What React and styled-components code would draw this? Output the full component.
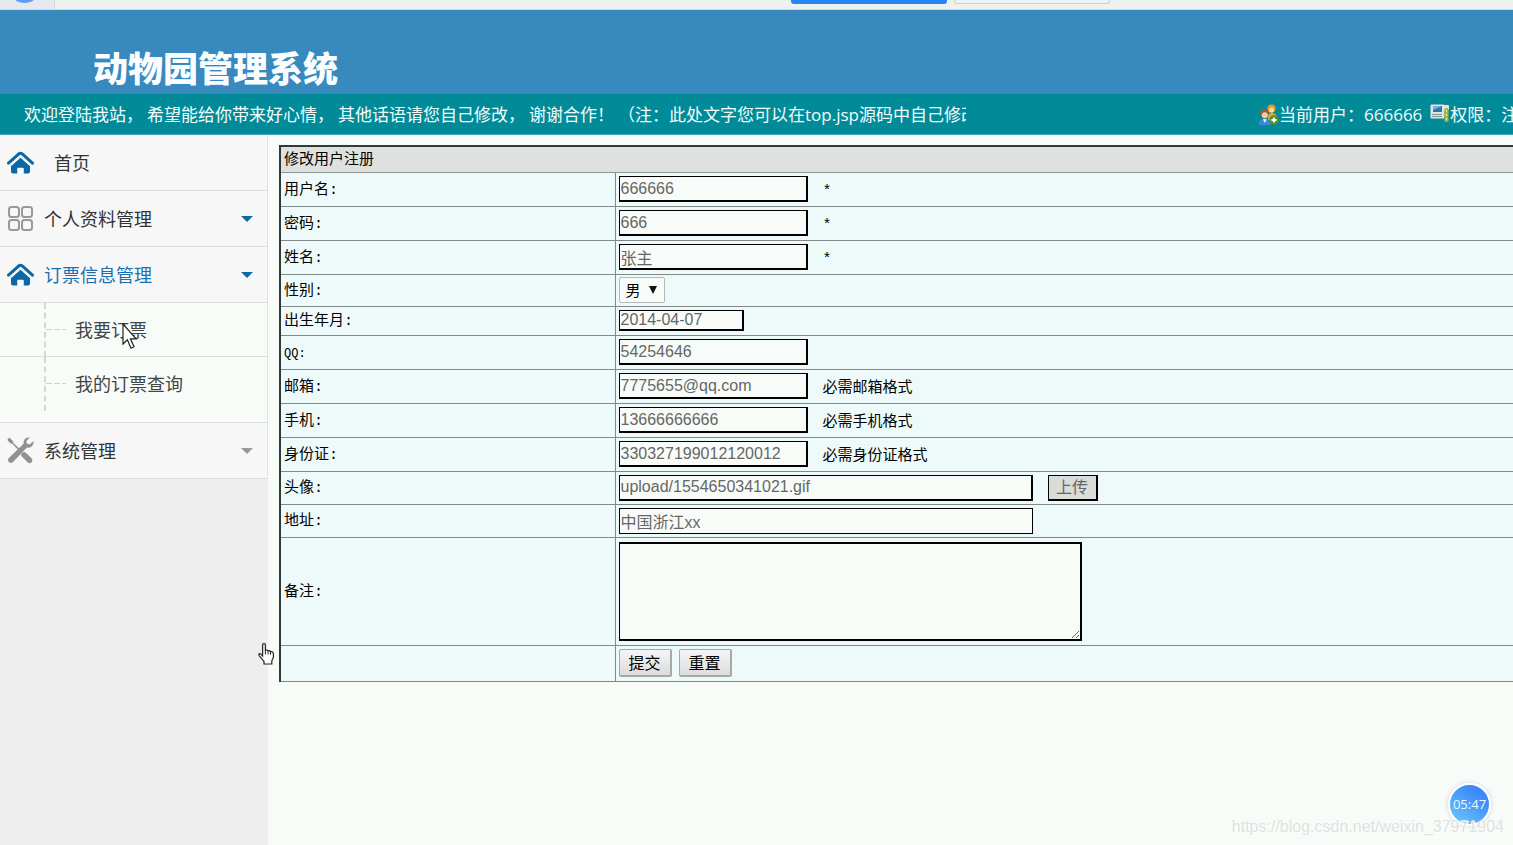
import React from 'react';
import styled, { createGlobalStyle } from 'styled-components';

const GlobalStyle = createGlobalStyle`
  * { box-sizing: border-box; }
  html, body, #root { height: 100%; }
  body {
    margin: 0;
    overflow: hidden;
    background: #f8fcf8;
    font-family: 'Open Sans', 'Noto Sans CJK SC', sans-serif;
  }
`;

const Page = styled.div`
  min-height: 100vh;
  display: flex;
  flex-direction: column;
  position: relative;
  overflow: hidden;
`;

/* browser chrome above the site */
const Chrome = styled.div`
  height: 10px;
  flex: none;
  display: flex;
  background: #eef2ee;
  border-bottom: 1px solid #c4e0e4;
`;
const ChromeTab = styled.div`
  width: 55px;
  display: flex;
  align-items: flex-start;
  padding-left: 15px;
  background: #e6eaf0;
  border-right: 1px solid #d4d8dc;
`;
const ChromeButtons = styled.div`
  flex: 1;
  display: flex;
  gap: 7px;
  align-items: flex-start;
  justify-content: flex-end;
  padding-right: 403px;
`;
const ChromeButton = styled.div`
  width: 156px;
  height: 4px;
  border-radius: 0 0 3px 3px;
  background: ${props => props.$primary ? '#2388f5' : '#eef1f5'};
  border: ${props => props.$primary ? '0' : '1px solid #cdd2d2'};
  border-top: 0;
`;

const Banner = styled.header`
  height: 84px;
  flex: none;
  padding: 31px 0 0 93px;
  background: #3889bd;
`;
const Title = styled.h1`
  margin: 0;
  font-family: 'Noto Sans CJK SC', sans-serif;
  font-size: 35px;
  line-height: 52px;
  font-weight: 900;
  color: #fafdff;
`;

const InfoBar = styled.div`
  height: 41px;
  flex: none;
  display: flex;
  align-items: center;
  justify-content: space-between;
  padding: 1px 0 0 24px;
  background: #018b99;
  border-bottom: 1px solid #4aa5cc;
  color: #f2fdfd;
  font-size: 17px;
  line-height: 24px;
  white-space: nowrap;
`;
const Marquee = styled.div`
  flex: 0 1 942px;
  display: flex;
  gap: 4px;
  overflow: hidden;
`;
const UserInfo = styled.div`
  flex: 0 0 255px;
  display: flex;
  align-items: center;
  gap: 8px;
  overflow: hidden;
`;
const UserItem = styled.span`
  flex: none;
  display: flex;
  align-items: center;
`;

const Body = styled.div`
  flex: 1;
  display: flex;
`;
const Sidebar = styled.nav`
  width: 268px;
  flex: none;
  background: #eeeeee;
`;
const MenuItem = styled.a`
  height: 56px;
  display: flex;
  align-items: center;
  gap: ${props => props.$wide ? '20px' : '10px'};
  padding: 0 14px 0 7px;
  background: #f7f7f8;
  border-right: 1px solid #e2e4e2;
  border-bottom: 1px solid #dcdedc;
  color: ${props => props.$active ? '#1b6fae' : '#333'};
  font-size: 18px;
  line-height: 26px;
  text-decoration: none;
`;
const MenuText = styled.span`
  flex: 1;
`;
const Caret = styled.span`
  border: 6px solid transparent;
  border-top-color: ${props => props.$muted ? '#999' : '#0c6aa8'};
  border-bottom: 0;
`;
const SubMenu = styled.ul`
  margin: 0;
  padding: 0 0 11px;
  list-style: none;
  background: #f8fcf8;
  border-right: 1px solid #e2e4e2;
  border-bottom: 1px solid #dcdedc;
`;
const SubItem = styled.li`
  height: 54px;
  display: flex;
  align-items: center;
  border-bottom: 1px solid ${props => props.$last ? 'transparent' : '#dcdedc'};
`;
const Branch = styled.span`
  width: 22px;
  height: 54px;
  margin-left: 44px;
  border-left: 2px dashed #d4d8d4;
  display: flex;
  align-items: center;
  &::after {
    content: '';
    flex: 1;
    height: 1px;
    background: repeating-linear-gradient(90deg, #cdd2cd 0 6px, transparent 6px 8px);
  }
`;
const SubLink = styled.a`
  padding-left: 9px;
  color: #444;
  font-size: 18px;
  line-height: 26px;
  text-decoration: none;
`;

const Main = styled.main`
  flex: 1;
  min-width: 0;
  overflow: hidden;
  padding: 10px 0 0 11px;
`;
const FormTable = styled.table`
  width: calc(100% + 20px);
  table-layout: fixed;
  border-collapse: collapse;
  border: 2px solid #303a36;
  border-bottom-width: 1px;
  background: #eefaf9;
  color: #000;
  font-family: 'Liberation Mono', 'Noto Sans CJK SC', monospace;
  font-size: 15px;
  line-height: 20px;
`;
const LabelCol = styled.col`
  width: 335px;
`;
const HeadCell = styled.th`
  height: 26px;
  padding: 3px 3px 0;
  background: #dfe1de;
  border-bottom: 1px solid #8d9492;
  font-weight: 400;
  text-align: left;
`;
const Row = styled.tr`
  height: ${props => props.$height || 34}px;
`;
const Cell = styled.td`
  padding: 0 4px 0 3px;
  border: 1px solid #7f8987;
`;
const FieldLabel = styled.label`
  display: block;
  padding-top: 3px;
  font-size: ${props => props.$latin ? '12px' : '15px'};
`;
const Field = styled.div`
  display: flex;
  align-items: center;
  gap: ${props => props.$tight ? '7px' : '15px'};
`;
const TextInput = styled.input`
  width: ${props => props.$width || 189}px;
  height: ${props => props.$short ? '21px' : '26px'};
  padding: 0 1px;
  border: 1px solid #000;
  border-right-width: ${props => props.$thin ? '1px' : '2px'};
  border-bottom-width: ${props => props.$thin ? '1px' : '2px'};
  background: #f8fcf8;
  color: #666;
  font-family: 'Liberation Sans', 'Noto Sans CJK SC', sans-serif;
  font-size: 16px;
  line-height: 20px;
`;
const SelectBox = styled.span`
  position: relative;
  display: flex;
`;
const Select = styled.select`
  appearance: none;
  width: 46px;
  height: 26px;
  padding: 0 0 2px 6px;
  border: 1px solid #b4b8b6;
  border-radius: 2px;
  background: #f8fcf8;
  color: #000;
  font-family: 'Noto Sans CJK SC', sans-serif;
  font-size: 15px;
`;
const SelectArrow = styled.span`
  position: absolute;
  right: 8px;
  top: 9px;
  border: 4px solid transparent;
  border-top: 8px solid #111;
  border-bottom: 0;
  pointer-events: none;
`;
const TextArea = styled.textarea`
  width: 463px;
  height: 99px;
  border: 2px solid #000;
  border-left-width: 1px;
  background: #f8fcf8;
  font-size: 16px;
`;
const Hint = styled.span`
  padding-top: 6px;
`;
const Button = styled.button`
  width: 53px;
  height: 28px;
  padding: 0 0 2px;
  border: 1px solid #a4a8a6;
  border-right: 2px solid #a4a8a6;
  border-bottom: 2px solid #a4a8a6;
  border-radius: 2px;
  background: linear-gradient(#f5f5f5, #dcdcdc);
  color: #000;
  font-family: 'Noto Sans CJK SC', sans-serif;
  font-size: 16px;
  line-height: 20px;
`;
const UploadButton = styled(Button)`
  width: 50px;
  height: 26px;
  border: 1px solid #000;
  border-right-width: 2px;
  border-bottom-width: 2px;
  border-radius: 0;
  background: #dadcda;
  color: #666;
`;

const Pointer = styled.svg`
  position: absolute;
  left: ${props => props.$x}px;
  top: ${props => props.$y}px;
  pointer-events: none;
`;
const Timer = styled.div`
  position: absolute;
  right: 22px;
  bottom: 19px;
  width: 43px;
  height: 43px;
  display: flex;
  align-items: center;
  justify-content: center;
  padding-bottom: 2px;
  border: 2px solid #fff;
  border-radius: 50%;
  background: linear-gradient(215deg, #3c86fa 20%, #4aa0fa 50%, #6cc8fc 95%);
  box-shadow: 0 0 5px #ccd4dc;
  color: #f0f8ff;
  font-size: 13px;
`;
const Watermark = styled.div`
  position: absolute;
  right: 9px;
  bottom: 8px;
  color: #dfe2df;
  font-family: 'Liberation Sans', sans-serif;
  font-size: 16px;
  line-height: 20px;
  text-shadow: 1px 1px 0 #fff;
`;

const HomeIcon = () => (
  <svg width="27" height="24" viewBox="0 0 27 24">
    <path d="M1.5 12.2 11.8 3Q13.5 1.6 15.2 3L25.5 12.2" fill="none" stroke="#0a68a6" strokeWidth="3" strokeLinecap="round" />
    <path d="M13.5 6.8 23 15.2V20.6q0 2-2 2h-4.2v-4.8q0-1-1-1h-4.6q-1 0-1 1v4.8H6q-2 0-2-2v-5.4z" fill="#0a68a6" />
  </svg>
);

const GridIcon = () => (
  <svg width="27" height="27" viewBox="0 0 27 27" fill="none" stroke="#999" strokeWidth="2">
    <rect x="2" y="2" width="10" height="10" rx="2.5" />
    <rect x="15" y="2" width="10" height="10" rx="2.5" />
    <rect x="2" y="15" width="10" height="10" rx="2.5" />
    <rect x="15" y="15" width="10" height="10" rx="2.5" />
  </svg>
);

const ToolsIcon = () => (
  <svg width="27" height="27" viewBox="0 0 27 27" fill="#919191">
    <path d="M1 1.2 3 1l3.2 3.4-.1 1.3 7 6.6-1.2 1.3-7-7-1.4 0L.5 3.2z" />
    <path d="M14.4 16.8q2-2.6 4.2-1.2l6.2 6q1.4 1.8-.2 3.6t-3.8.4l-6-6q-1.4-1.2-.4-2.8z" />
    <path d="M22.8.6q-3.6-.8-5.4 1.8-1.2 1.8-.6 4.2L2.4 20.4q-2.4 2-.8 4.4 2 2.2 4.4.2L20 10.4q3 .8 5-1.2 2-2.2 1.4-5.2L23 7.2l-3-.4-.6-2.8z" />
  </svg>
);

const UsersIcon = () => (
  <svg width="21" height="22" viewBox="0 0 21 22">
    <circle cx="13.5" cy="4.5" r="4" fill="#e59a2e" />
    <circle cx="13.5" cy="6" r="2.6" fill="#fbd9a0" />
    <path d="M10 13q0-4 4-4t5 4v3h-9z" fill="#e4a53c" />
    <circle cx="6.5" cy="9.5" r="4.3" fill="#a8542e" />
    <circle cx="6.8" cy="11.3" r="3" fill="#f6caa4" />
    <path d="M.5 21q0-6 6-6t6 6z" fill="#3f86d8" />
    <path d="m4.8 15.2 2 3.6 2-3.6z" fill="#fff" />
    <circle cx="16" cy="16" r="4.8" fill="#4c9330" />
    <path d="M16 13.4v5.2M13.4 16h5.2" stroke="#fff" strokeWidth="1.8" />
  </svg>
);

const TerminalIcon = () => (
  <svg width="20" height="24" viewBox="0 0 20 24">
    <rect x=".5" y="1.5" width="14" height="14" rx="1" fill="#dfe3e4" />
    <rect x="3" y="3" width="9" height="6" fill="#3474b0" />
    <path d="M3 3h9L3 7z" fill="#78b1de" />
    <path d="M2 11.5h10M2 13.5h10" stroke="#8b9494" />
    <rect x="13" y="2" width="6" height="5" rx="1" fill="#e8e4d8" />
    <rect x="14.5" y="5" width="4" height="14" rx="1.5" fill="#a8b830" />
    <path d="M16.5 7v10" stroke="#eef08a" strokeDasharray="2 2" />
  </svg>
);

const notices = [
  '欢迎登陆我站，',
  '希望能给你带来好心情，',
  '其他话语请您自己修改，',
  '谢谢合作！',
  '（注：此处文字您可以在top.jsp源码中自己修改）',
];

const fields = [
  { id: 'username', label: '用户名', value: '666666', hint: '*' },
  { id: 'password', label: '密码', value: '666', hint: '*' },
  { id: 'realname', label: '姓名', value: '张主', hint: '*' },
  { id: 'sex', label: '性别', options: ['男', '女'], height: 32 },
  { id: 'birthday', label: '出生年月', value: '2014-04-07', width: 125, short: true, height: 29 },
  { id: 'qq', label: 'QQ', value: '54254646', latin: true },
  { id: 'email', label: '邮箱', value: '7775655@qq.com', hint: '必需邮箱格式' },
  { id: 'mobile', label: '手机', value: '13666666666', hint: '必需手机格式' },
  { id: 'idcard', label: '身份证', value: '330327199012120012', hint: '必需身份证格式' },
  { id: 'avatar', label: '头像', value: 'upload/1554650341021.gif', width: 414, upload: true, height: 33 },
  { id: 'address', label: '地址', value: '中国浙江xx', width: 414, thin: true, height: 33 },
  { id: 'remark', label: '备注', multiline: true, height: 108 },
];

function FieldControl({ field }) {
  if (field.options) {
    return (
      <SelectBox>
        <Select id={field.id}>
          {field.options.map(option => <option key={option}>{option}</option>)}
        </Select>
        <SelectArrow />
      </SelectBox>
    );
  }
  if (field.multiline) {
    return <TextArea id={field.id} />;
  }
  return (
    <TextInput
      id={field.id}
      type="text"
      defaultValue={field.value}
      $width={field.width}
      $short={field.short}
      $thin={field.thin}
    />
  );
}

function RegisterForm() {
  return (
    <form onSubmit={e => e.preventDefault()}>
      <FormTable>
        <colgroup>
          <LabelCol />
          <col />
        </colgroup>
        <thead>
          <tr>
            <HeadCell colSpan={2}>修改用户注册</HeadCell>
          </tr>
        </thead>
        <tbody>
          {fields.map(field => (
            <Row key={field.id} $height={field.height}>
              <Cell>
                <FieldLabel htmlFor={field.id} $latin={field.latin}>{field.label}:</FieldLabel>
              </Cell>
              <Cell>
                <Field>
                  <FieldControl field={field} />
                  {field.hint && <Hint>{field.hint}</Hint>}
                  {field.upload && <UploadButton type="button">上传</UploadButton>}
                </Field>
              </Cell>
            </Row>
          ))}
          <Row $height={36}>
            <Cell />
            <Cell>
              <Field $tight>
                <Button type="submit">提交</Button>
                <Button type="reset">重置</Button>
              </Field>
            </Cell>
          </Row>
        </tbody>
      </FormTable>
    </form>
  );
}

function SideMenu() {
  return (
    <Sidebar>
      <MenuItem href="#" $wide>
        <HomeIcon />
        <MenuText>首页</MenuText>
      </MenuItem>
      <MenuItem href="#">
        <GridIcon />
        <MenuText>个人资料管理</MenuText>
        <Caret />
      </MenuItem>
      <MenuItem href="#" $active>
        <HomeIcon />
        <MenuText>订票信息管理</MenuText>
        <Caret />
      </MenuItem>
      <SubMenu>
        <SubItem>
          <Branch />
          <SubLink href="#">我要订票</SubLink>
        </SubItem>
        <SubItem $last>
          <Branch />
          <SubLink href="#">我的订票查询</SubLink>
        </SubItem>
      </SubMenu>
      <MenuItem href="#">
        <ToolsIcon />
        <MenuText>系统管理</MenuText>
        <Caret $muted />
      </MenuItem>
    </Sidebar>
  );
}

export default function App() {
  return (
    <Page>
      <GlobalStyle />
      <Chrome>
        <ChromeTab>
          <svg width="19" height="4" viewBox="0 0 19 4">
            <ellipse cx="9.5" cy="-2" rx="10" ry="5" fill="#5a9cf0" />
          </svg>
        </ChromeTab>
        <ChromeButtons>
          <ChromeButton $primary />
          <ChromeButton />
        </ChromeButtons>
      </Chrome>
      <Banner>
        <Title>动物园管理系统</Title>
      </Banner>
      <InfoBar>
        <Marquee>
          {notices.map(text => <span key={text}>{text}</span>)}
        </Marquee>
        <UserInfo>
          <UserItem><UsersIcon />当前用户：666666</UserItem>
          <UserItem><TerminalIcon />权限：注册用户</UserItem>
        </UserInfo>
      </InfoBar>
      <Body>
        <SideMenu />
        <Main>
          <RegisterForm />
        </Main>
      </Body>
      <Pointer $x={122} $y={323} width="15" height="27" viewBox="0 0 15 27">
        <path d="M1 1v20l4.4-4.2 3.6 8.4 3-1.4-3.6-8H14z" fill="#fff" stroke="#222" strokeWidth="1.2" />
      </Pointer>
      <Pointer $x={258} $y={643} width="17" height="22" viewBox="0 0 17 22">
        <path
          d="M4.6 13V2q0-1.4 1.4-1.4T7.4 2v6q0-1 1.2-1t1.4 1.4q.2-.8 1.3-.7t1.2 1.5q.2-.8 1.3-.6 1.6.2 1.6 2.4v3.4l-1.6 3.4V21H6v-2.6L1.2 12.6q-.8-1.4.4-2 1-.4 3 2.4z"
          fill="#fff"
          stroke="#222"
          strokeWidth="1.2"
        />
        <path d="M7.4 8v3.4M10 8.4v3M12.5 9v2.6" stroke="#222" />
      </Pointer>
      <Timer>05:47</Timer>
      <Watermark>https://blog.csdn.net/weixin_37971904</Watermark>
    </Page>
  );
}
